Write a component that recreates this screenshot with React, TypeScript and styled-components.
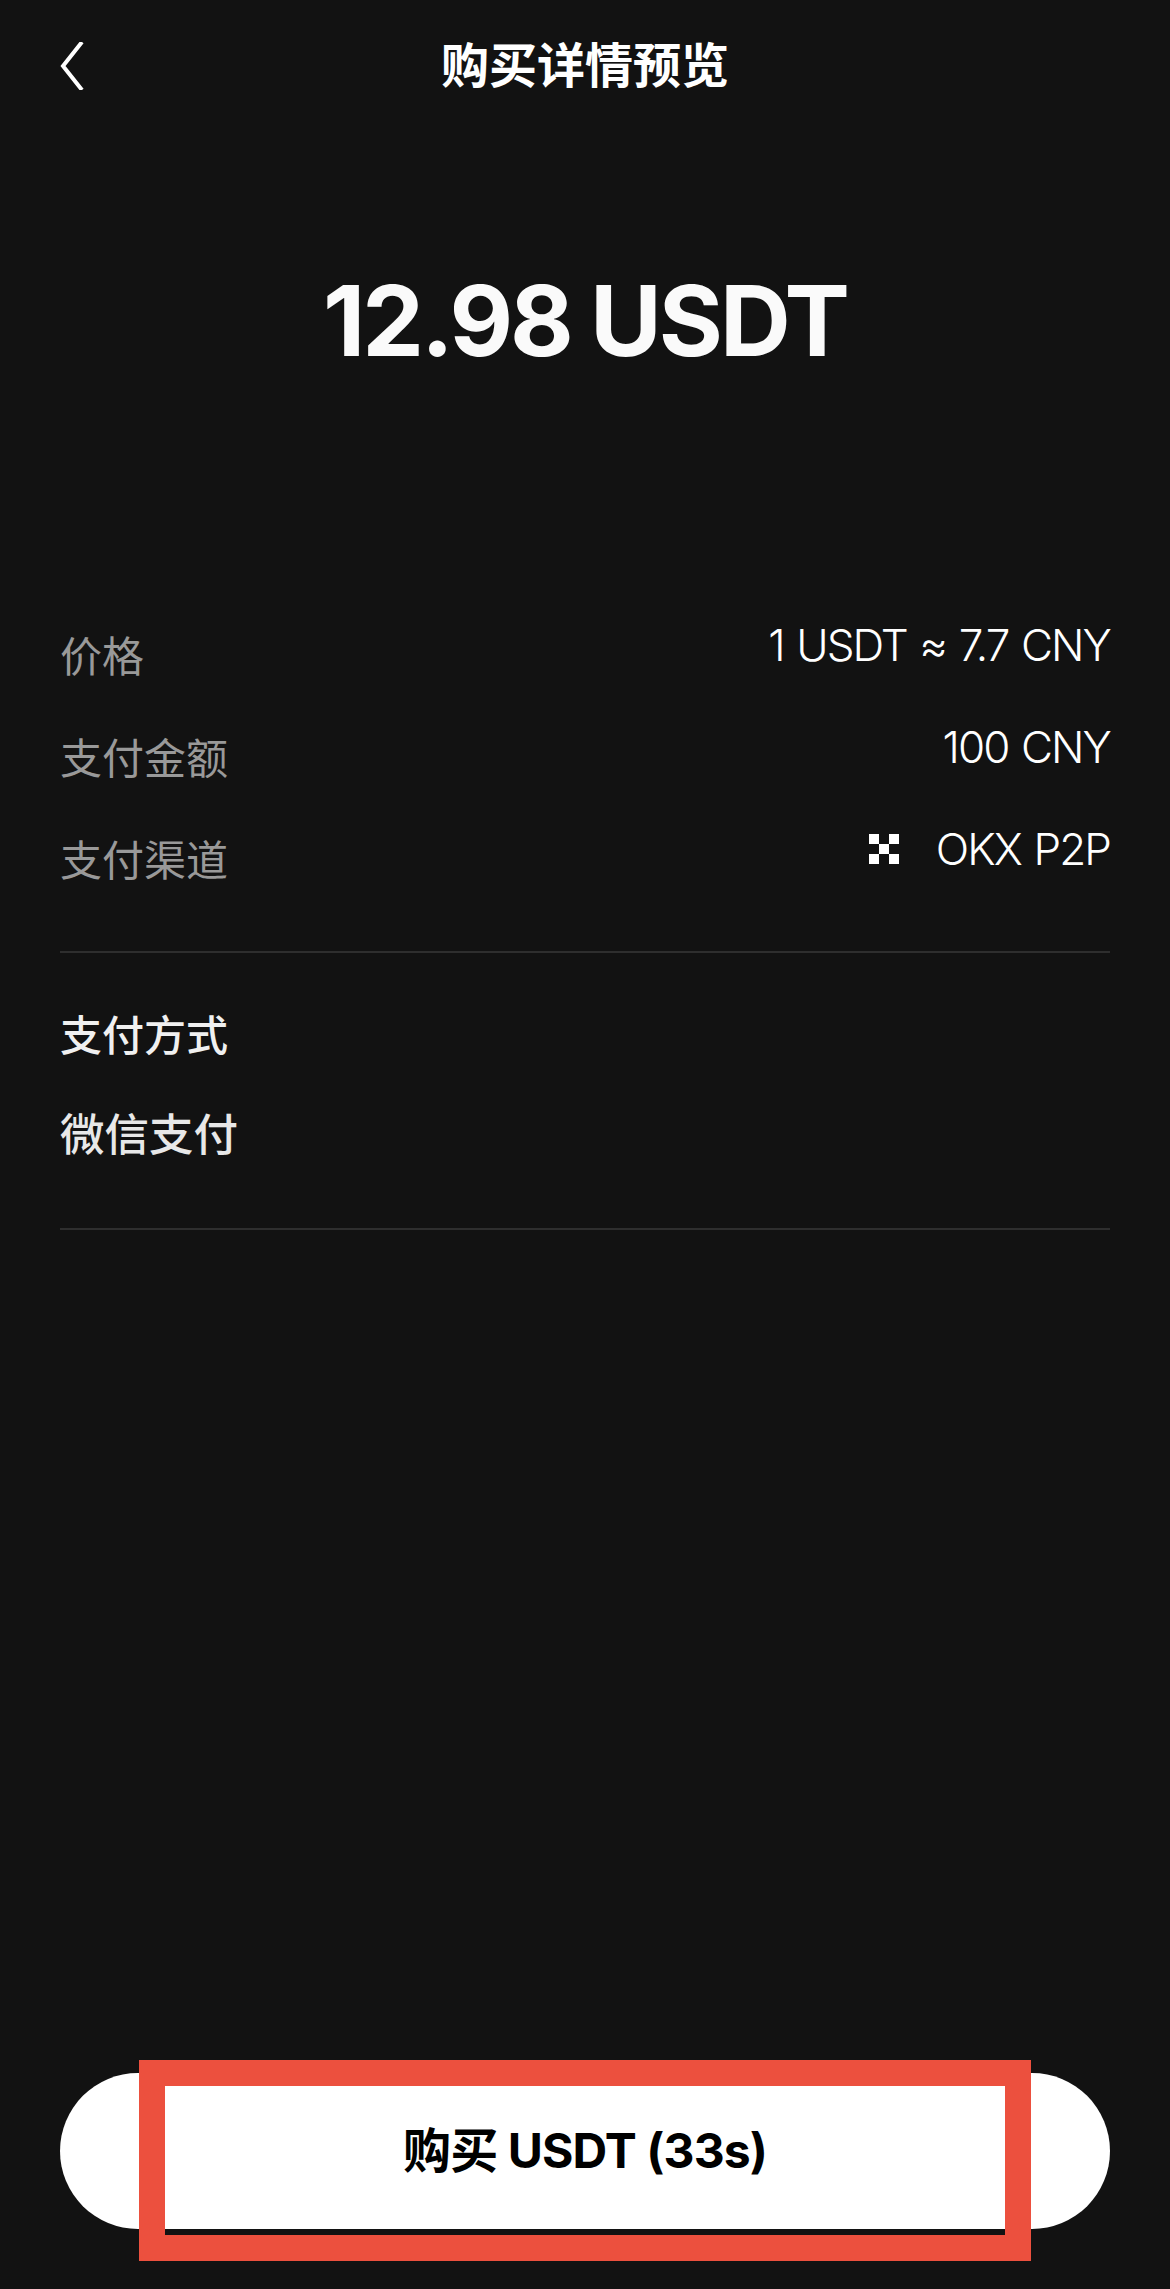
import React from "react";
import styled, { createGlobalStyle } from "styled-components";

const Global = createGlobalStyle`
  html, body { margin: 0; padding: 0; background: #121212; }
  * { box-sizing: border-box; }
`;

const sans = `Inter, "Noto Sans CJK SC", sans-serif`;
const cjk = `"Noto Sans CJK SC", sans-serif`;

const Page = styled.div`
  width: 1170px;
  height: 2289px;
  background: #121212;
  color: #fff;
  display: flex;
  flex-direction: column;
  padding: 0 60px;
  font-family: ${sans};
`;

const Header = styled.header`
  height: 132px;
  display: grid;
  grid-template-columns: 60px 1fr 60px;
  align-items: center;
`;

const BackIcon = styled.svg`
  width: 24px;
  height: 48px;
  display: block;
`;

const Title = styled.h1`
  margin: 0 0 8px;
  text-align: center;
  font-family: ${cjk};
  font-size: 48px;
  line-height: 60px;
  font-weight: 700;
`;

const Amount = styled.div`
  margin-top: 139px;
  height: 100px;
  text-align: center;
  font-size: 98px;
  line-height: 100px;
  font-weight: 700;
  letter-spacing: -3px;
  word-spacing: -1px;
  color: #fafafa;
`;

const Details = styled.section`
  margin-top: 249px;
  display: flex;
  flex-direction: column;
  gap: 42px;
`;

const Row = styled.div`
  height: 60px;
  display: flex;
  justify-content: space-between;
  align-items: flex-start;
`;

const Label = styled.span`
  font-family: ${cjk};
  font-size: 42px;
  line-height: 60px;
  margin-top: 4px;
  color: #999999;
`;

const Value = styled.span`
  display: flex;
  align-items: center;
  gap: 37px;
  font-size: 44px;
  line-height: 50px;
  font-weight: 300;
  letter-spacing: -1.9px;
  word-spacing: 2px;
  color: #fff;
`;

const LogoIcon = styled.svg`
  width: 30px;
  height: 30px;
  display: block;
`;

const Divider = styled.div`
  height: 2px;
  background: #2e2e2e;
`;

const FirstDivider = styled(Divider)`
  margin-top: 67px;
`;

const Method = styled.section`
  padding-top: 50px;
  height: 275px;
`;

const MethodTitle = styled.div`
  font-family: ${cjk};
  font-size: 42px;
  line-height: 60px;
  font-weight: 500;
  color: #f0f0f0;
`;

const MethodValue = styled.div`
  margin-top: 38px;
  font-family: ${cjk};
  font-size: 44.5px;
  line-height: 62px;
  font-weight: 500;
  color: #e8e8e8;
`;

const Footer = styled.footer`
  margin-top: auto;
  margin-bottom: 60px;
  position: relative;
`;

const BuyButton = styled.button`
  width: 100%;
  height: 156px;
  border: 0;
  border-radius: 78px;
  background: #fff;
  color: #000;
  font-family: ${sans};
  font-size: 48px;
  font-weight: 700;
  letter-spacing: -0.9px;
  padding: 0 0 8px;
`;

const Highlight = styled.div`
  position: absolute;
  left: 79px;
  top: -13px;
  width: 892px;
  height: 201px;
  border: 26px solid #ec503e;
  pointer-events: none;
`;

const App: React.FC = () => (
  <Page>
    <Global />
    <Header>
      <BackIcon viewBox="0 0 24 48" fill="none">
        <path d="M22 0 L3 24 L22 48" stroke="#fff" strokeWidth="4" />
      </BackIcon>
      <Title>购买详情预览</Title>
    </Header>
    <Amount>12.98 USDT</Amount>
    <Details>
      <Row>
        <Label>价格</Label>
        <Value>1 USDT ≈ 7.7 CNY</Value>
      </Row>
      <Row>
        <Label>支付金额</Label>
        <Value>100 CNY</Value>
      </Row>
      <Row>
        <Label>支付渠道</Label>
        <Value>
          <LogoIcon viewBox="0 0 30 30" fill="#fff">
            <rect x="0" y="0" width="10" height="10" />
            <rect x="20" y="0" width="10" height="10" />
            <rect x="10" y="10" width="10" height="10" />
            <rect x="0" y="20" width="10" height="10" />
            <rect x="20" y="20" width="10" height="10" />
          </LogoIcon>
          OKX P2P
        </Value>
      </Row>
    </Details>
    <FirstDivider />
    <Method>
      <MethodTitle>支付方式</MethodTitle>
      <MethodValue>微信支付</MethodValue>
    </Method>
    <Divider />
    <Footer>
      <BuyButton>购买 USDT (33s)</BuyButton>
      <Highlight />
    </Footer>
  </Page>
);

export default App;
